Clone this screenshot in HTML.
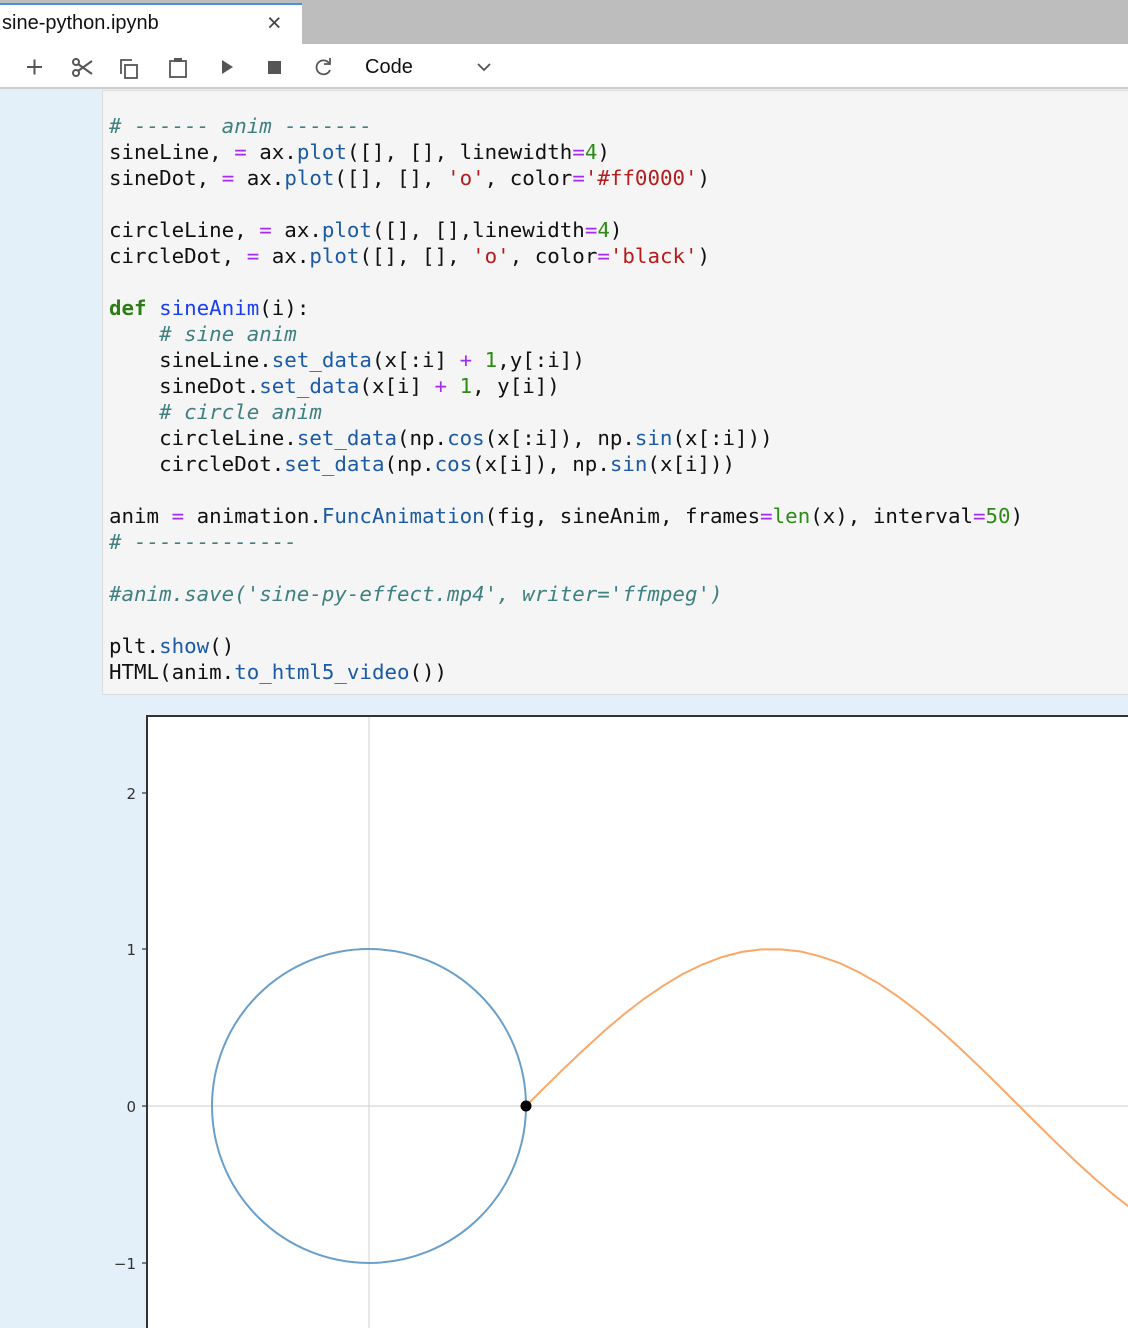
<!DOCTYPE html>
<html><head><meta charset="utf-8"><style>
*{margin:0;padding:0;box-sizing:border-box}
body{width:1128px;height:1328px;overflow:hidden;background:#e3eff9;font-family:"Liberation Sans",sans-serif;position:relative}
#tabbar{position:absolute;left:0;top:0;width:1128px;height:44px;background:#bdbdbd}
#tab{position:absolute;left:0;top:3px;width:302px;height:41px;background:#fff;border-top:2px solid #4a90e2}
#tab span{position:absolute;left:2px;top:7px;font-size:20px;color:#111}
#tab b{position:absolute;left:267px;top:4px;font-weight:normal;font-size:25px;color:#444}
#tb{position:absolute;left:0;top:44px;width:1128px;height:45px;background:#fff;border-bottom:2px solid #ccc}
#code{position:absolute;left:102px;top:90px;width:1030px;height:605px;background:#f5f5f5;border:1px solid #dcdcdc;border-right:none}
pre{position:absolute;left:6px;top:22px;font-family:"DejaVu Sans Mono","Liberation Mono",monospace;font-size:20.8px;line-height:26px;color:#111}
.c{color:#408080;font-style:italic}.k{color:#2e7d17;font-weight:bold}.f{color:#1a3ef0}.p{color:#1c5aa6}.o{color:#a52bf0}.n{color:#2e8b17}.s{color:#b41d1d}
</style></head><body>
<div id="tabbar"><div id="tab"><span>sine-python.ipynb</span><b>×</b></div></div>
<div id="tb">
<svg width="520" height="45" style="position:absolute;left:0;top:0" fill="none" stroke="#555" stroke-width="2">
<path d="M27 23h15M34.5 15.5v15"/>
<circle cx="76" cy="29" r="3"/><circle cx="76" cy="18" r="3"/><path d="M78 20l14 10M78 27l14-10"/>
<rect x="125" y="21" width="12" height="13" stroke-width="1.8"/><path d="M121 30v-14h11" stroke-width="1.8"/>
<rect x="170" y="17" width="16" height="16" stroke-width="1.8"/><rect x="174" y="14" width="8" height="4" fill="#555" stroke="none"/>
<path d="M222 16l11 7-11 7z" fill="#555" stroke="none"/>
<rect x="268" y="17" width="13" height="13" fill="#555" stroke="none"/>
<path d="M329 19a7 7 0 1 0 1 7" stroke-width="1.8"/><path d="M330 14v6h-6" stroke-width="1.8"/>
<path d="M478 20l6 6 6-6" stroke-width="1.8"/>
</svg>
<span style="position:absolute;left:365px;top:12px;font-size:20px;color:#111">Code</span>
</div>
<div id="code"><pre><span class="c"># ------ anim -------</span>
sineLine, <span class="o">=</span> ax.<span class="p">plot</span>([], [], linewidth<span class="o">=</span><span class="n">4</span>)
sineDot, <span class="o">=</span> ax.<span class="p">plot</span>([], [], <span class="s">'o'</span>, color<span class="o">=</span><span class="s">'#ff0000'</span>)

circleLine, <span class="o">=</span> ax.<span class="p">plot</span>([], [],linewidth<span class="o">=</span><span class="n">4</span>)
circleDot, <span class="o">=</span> ax.<span class="p">plot</span>([], [], <span class="s">'o'</span>, color<span class="o">=</span><span class="s">'black'</span>)

<span class="k">def</span> <span class="f">sineAnim</span>(i):
    <span class="c"># sine anim</span>
    sineLine.<span class="p">set_data</span>(x[:i] <span class="o">+</span> <span class="n">1</span>,y[:i])
    sineDot.<span class="p">set_data</span>(x[i] <span class="o">+</span> <span class="n">1</span>, y[i])
    <span class="c"># circle anim</span>
    circleLine.<span class="p">set_data</span>(np.<span class="p">cos</span>(x[:i]), np.<span class="p">sin</span>(x[:i]))
    circleDot.<span class="p">set_data</span>(np.<span class="p">cos</span>(x[i]), np.<span class="p">sin</span>(x[i]))

anim <span class="o">=</span> animation.<span class="p">FuncAnimation</span>(fig, sineAnim, frames<span class="o">=</span><span class="n">len</span>(x), interval<span class="o">=</span><span class="n">50</span>)
<span class="c"># -------------</span>

<span class="c">#anim.save('sine-py-effect.mp4', writer='ffmpeg')</span>

plt.<span class="p">show</span>()
HTML(anim.<span class="p">to_html5_video</span>())</pre></div>
<svg width="1128" height="1328" style="position:absolute;left:0;top:0">
<rect x="147" y="716" width="990" height="620" fill="#fff" stroke="#333" stroke-width="2"/>
<line x1="369" y1="717" x2="369" y2="1328" stroke="#d8d8d8" stroke-width="1.2"/>
<line x1="148" y1="1106" x2="1128" y2="1106" stroke="#d8d8d8" stroke-width="1.2"/>
<g stroke="#333" stroke-width="1.2"><line x1="142" y1="793" x2="147" y2="793"/><line x1="142" y1="949" x2="147" y2="949"/><line x1="142" y1="1106" x2="147" y2="1106"/><line x1="142" y1="1263" x2="147" y2="1263"/></g>
<g font-family="DejaVu Sans,sans-serif" font-size="15" fill="#333" text-anchor="end"><text x="136" y="799">2</text><text x="136" y="955">1</text><text x="136" y="1112">0</text><text x="136" y="1269">−1</text></g>
<circle cx="369" cy="1106" r="157" fill="none" stroke="#6a9fca" stroke-width="2"/>
<polyline fill="none" stroke="#f9a86a" stroke-width="2" points="526,1106 545.6,1086.4 565.25,1067.2 584.9,1048.6 604.5,1030.7 624.1,1014.2 643.75,999 663.4,985.6 683,973.9 702.6,964.4 722.25,957 741.9,951.9 761.5,949.4 781.1,949.4 800.75,951.5 820.4,956.4 840,963.2 859.6,972.6 879.25,983.8 898.9,997.2 918.5,1012 938.1,1028.5 957.75,1046.1 977.4,1064.8 997,1083.8 1016.6,1103.5 1036.25,1123 1055.9,1142.4 1075.5,1161.1 1095.1,1179 1114.75,1195.7 1134.4,1211"/>
<circle cx="526" cy="1106" r="5.5" fill="#000"/>
</svg>
</body></html>
